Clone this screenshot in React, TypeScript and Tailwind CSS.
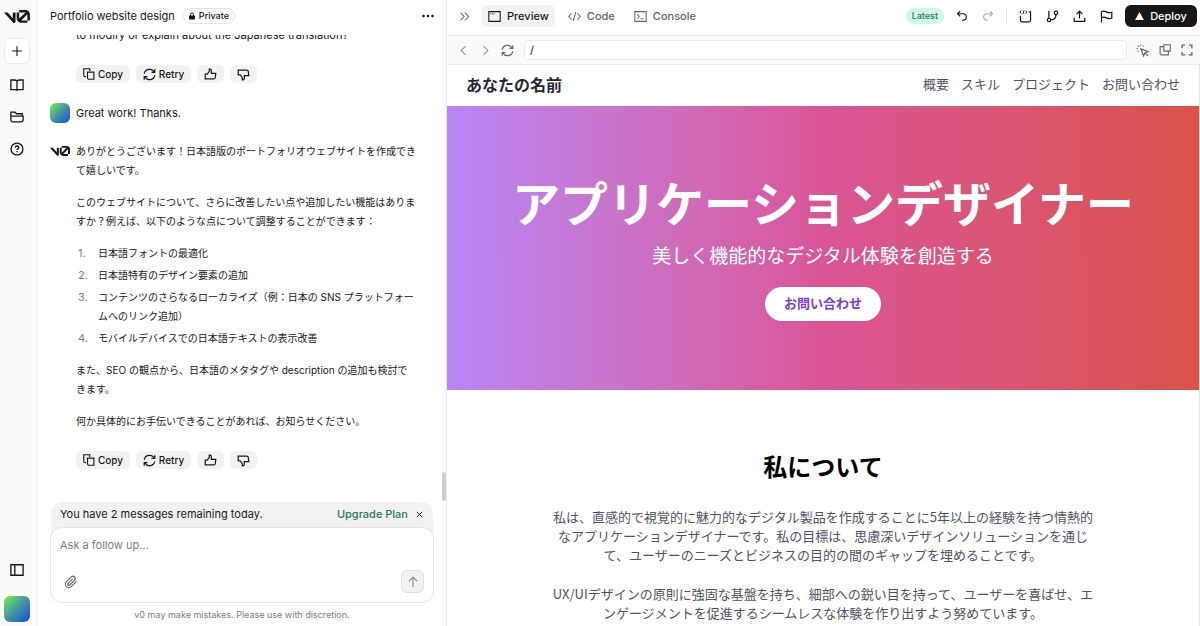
import { useState } from 'react'
import type { ReactNode } from 'react'

const FOLLOW_UPS = [
  '日本語フォントの最適化',
  '日本語特有のデザイン要素の追加',
  'コンテンツのさらなるローカライズ（例：日本の SNS プラットフォームへのリンク追加）',
  'モバイルデバイスでの日本語テキストの表示改善',
]

const SITE_LINKS = [
  { href: '#overview', label: '概要' },
  { href: '#skills', label: 'スキル' },
  { href: '#projects', label: 'プロジェクト' },
  { href: '#contact', label: 'お問い合わせ' },
]

type Tab = 'preview' | 'code' | 'console'

export default function App() {
  return (
    <div className="flex h-screen overflow-hidden bg-white font-['Inter','Noto_Sans_CJK_JP',sans-serif] text-[#171717]">
      <Sidebar />
      <ChatPanel />
      <PreviewPanel />
    </div>
  )
}

function Sidebar() {
  return (
    <nav className="flex w-[38px] shrink-0 flex-col items-center border-r border-[#f0f0f0] bg-[#fafafa] pt-[10px] pb-1 pr-[3px]">
      <a href="#home" aria-label="Home" className="flex h-3 items-center">
        <Logo className="h-[13px] w-[26px]" />
      </a>
      <button
        aria-label="New chat"
        className="mt-4 flex size-[26px] items-center justify-center rounded-md border border-[#ebebeb] bg-white"
      >
        <Icon className="size-3">
          <path d="M8 1.500v13M1.500 8h13" />
        </Icon>
      </button>
      <div className="mt-[14px] flex flex-col gap-[18px]">
        <button aria-label="Library" className="size-[14px]">
          <Icon className="size-[14px]">
            <path d="M8 3.500v10M8 3.500C7.300 2.800 6.400 2.300 5.300 2.300H1v10.900h4.500c1 0 1.900.3 2.500.8.6-.5 1.500-.8 2.500-.8H15V2.300h-4.300C9.600 2.300 8.700 2.800 8 3.500z" />
          </Icon>
        </button>
        <button aria-label="Projects" className="size-[14px]">
          <Icon className="size-[14px]">
            <path d="M1 7V2.500h4.800l1.700 1.800H14V7M1 7h14v4.500c0 1.100-.9 2-2 2H3c-1.100 0-2-.9-2-2V7z" />
          </Icon>
        </button>
        <button aria-label="Help" className="size-[14px]">
          <Icon className="size-[14px]">
            <circle cx="8" cy="8" r="6.800" />
            <path d="M6 6.500c0-1.100.9-1.900 2-1.900s2 .7 2 1.800c0 1.400-2 1.500-2 2.800M8 10.300v1.500" />
          </Icon>
        </button>
      </div>
      <div className="mt-auto flex flex-col items-center gap-[19px]">
        <button aria-label="Toggle sidebar" className="size-[14px]">
          <Icon className="size-[14px]">
            <path d="M1 2h14v12H1zM5.500 2v12" />
          </Icon>
        </button>
        <button
          aria-label="Account"
          className="size-[26px] rounded-md bg-linear-135 from-[#6ee04f] from-10% via-[#4691a0] to-[#1e45e6]"
        />
      </div>
    </nav>
  )
}

function ChatPanel() {
  const [message, setMessage] = useState('')
  const [showBanner, setShowBanner] = useState(true)

  return (
    <section className="relative flex w-[409px] shrink-0 flex-col border-r border-[#ebebeb]">
      <header className="flex h-[35px] shrink-0 items-center pr-3 pb-[3px] pl-3">
        <h1 className="text-[11px] leading-4">Portfolio website design</h1>
        <span className="ml-2 flex h-4 items-center gap-1 rounded-full border border-[#e5e5e5] px-[5px] text-[9px] font-medium">
          <svg viewBox="0 0 12 14" className="h-2 w-[6px]" aria-hidden="true">
            <rect x="0" y="6" width="12" height="8" rx="1.500" fill="currentColor" />
            <path d="M3 7V4a3 3 0 0 1 6 0v3" fill="none" stroke="currentColor" strokeWidth="2" />
          </svg>
          Private
        </span>
        <button aria-label="More" className="ml-auto">
          <svg viewBox="0 0 12 12" className="size-3" fill="currentColor" aria-hidden="true">
            <circle cx="1.500" cy="6" r="1.300" />
            <circle cx="6" cy="6" r="1.300" />
            <circle cx="10.500" cy="6" r="1.300" />
          </svg>
        </button>
      </header>

      {/* Messages stay pinned to the newest one */}
      <div className="flex min-h-0 flex-1 flex-col justify-end overflow-hidden px-3 pb-[33px] text-[10px] leading-[19px]">
        <div className="pl-[26px]">
          <p className="text-[11px]">to modify or explain about the Japanese translation?</p>
          <MessageActions />
        </div>

        <div className="mt-5 flex items-center gap-[6px]">
          <span className="size-5 rounded-md bg-linear-135 from-[#6ee04f] from-10% via-[#4691a0] to-[#1e45e6]" />
          <p className="text-[11px]">Great work! Thanks.</p>
        </div>

        <div className="mt-[19px] flex gap-[6px]" lang="ja">
          <Logo className="mt-1 h-[10px] w-5 shrink-0" />
          <div className="w-[340px]">
            <div className="flex flex-col gap-[13px]">
              <p>ありがとうございます！日本語版のポートフォリオウェブサイトを作成できて嬉しいです。</p>
              <p>
                このウェブサイトについて、さらに改善したい点や追加したい機能はありますか？例えば、以下のような点について調整することができます：
              </p>
              <ol className="flex flex-col gap-[3px]">
                {FOLLOW_UPS.map((item, i) => (
                  <li key={item} className="flex">
                    <span className="w-[22px] shrink-0 pl-[2px] text-[11px] text-[#7d7d7d]">{i + 1}.</span>
                    <span>{item}</span>
                  </li>
                ))}
              </ol>
              <p>また、SEO の観点から、日本語のメタタグや description の追加も検討できます。</p>
              <p>何か具体的にお手伝いできることがあれば、お知らせください。</p>
            </div>
            <MessageActions />
          </div>
        </div>
      </div>

      <div className="absolute top-[472px] right-0 h-[29px] w-1 rounded-full bg-[#cfcfcf]" />

      <div className="shrink-0 px-3 pb-1">
        {showBanner && (
          <div className="mx-px -mb-3 flex h-[37px] items-center rounded-t-xl bg-[#f2f2f2] px-[9px] pb-3 text-[11px]">
            <span>You have 2 messages remaining today.</span>
            <a href="#upgrade" className="ml-auto font-medium text-[#2c7566]">
              Upgrade Plan
            </a>
            <button aria-label="Dismiss" onClick={() => setShowBanner(false)} className="ml-2 mr-px">
              <Icon className="size-[7px]" strokeWidth={2.200}>
                <path d="M2 2l12 12M14 2L2 14" />
              </Icon>
            </button>
          </div>
        )}
        <form
          onSubmit={(e) => e.preventDefault()}
          className="relative flex h-[76px] flex-col rounded-xl border border-[#e5e5e5] bg-white px-[9px] pt-[9px] pb-[9px]"
        >
          <textarea
            aria-label="Ask a follow up"
            value={message}
            onChange={(e) => setMessage(e.target.value)}
            placeholder="Ask a follow up…"
            className="min-h-0 flex-1 resize-none overflow-hidden text-[11px] leading-4 outline-none placeholder:text-[#7d7d7d]"
          />
          <div className="flex items-center justify-between pl-1">
            <button type="button" aria-label="Attach file" className="text-[#666]">
              <Icon className="size-[14px]" strokeWidth={1.300}>
                <path d="M14.200 7.300l-6 6c-1.500 1.500-4 1.500-5.500 0s-1.500-4 0-5.500l5.700-5.700c1-1 2.700-1 3.700 0s1 2.700 0 3.700L6.500 11.400c-.5.500-1.300.5-1.800 0s-.5-1.300 0-1.800L9.800 4.500" />
              </Icon>
            </button>
            <button
              aria-label="Send"
              className="flex size-[23px] items-center justify-center rounded-md border border-[#e0e0e0] bg-[#f2f2f2] text-[#8f8f8f]"
            >
              <Icon className="size-3">
                <path d="M8 15V1.500M2.500 7L8 1.500 13.500 7" />
              </Icon>
            </button>
          </div>
        </form>
        <p className="mt-[5px] text-center text-[9px] leading-[14px] text-[#7d7d7d]">
          v0 may make mistakes. Please use with discretion.
        </p>
      </div>
    </section>
  )
}

function MessageActions() {
  return (
    <div className="mt-5 flex h-[18px] gap-[6px] text-[10px] font-medium">
      <button className="flex w-[54px] items-center justify-center gap-[3px] rounded-md bg-[#f2f2f2]">
        <Icon className="size-3">
          <path d="M4 11.500H3c-1.100 0-2-.9-2-2V1h8v3M6 5.500h8.500V15H8c-1.100 0-2-.9-2-2z" />
        </Icon>
        Copy
      </button>
      <button className="flex w-[55px] items-center justify-center gap-[3px] rounded-md bg-[#f2f2f2]">
        <RefreshIcon />
        Retry
      </button>
      <button aria-label="Good response" className="flex w-[27px] items-center justify-center rounded-md bg-[#f2f2f2]">
        <ThumbIcon className="size-[13px]" />
      </button>
      <button aria-label="Bad response" className="flex w-[27px] items-center justify-center rounded-md bg-[#f2f2f2]">
        <ThumbIcon className="size-[13px] -scale-y-100" />
      </button>
    </div>
  )
}

function PreviewPanel() {
  const [tab, setTab] = useState<Tab>('preview')
  const [path, setPath] = useState('/')

  return (
    <section className="flex min-w-0 flex-1 flex-col">
      <header className="flex h-9 shrink-0 items-center border-b border-[#ebebeb] pr-[3px] pb-[3px] pl-3">
        <button aria-label="Collapse" className="mr-3 text-[#666]">
          <Icon className="size-[11px]">
            <path d="M2 2.500L7.500 8 2 13.500M8.500 2.500L14 8l-5.500 5.500" />
          </Icon>
        </button>
        <TabButton label="Preview" active={tab === 'preview'} onClick={() => setTab('preview')}>
          <path d="M1 2h14v12H1zM3 4.500h1M5 4.500h1M7 4.500h1" />
        </TabButton>
        <TabButton label="Code" active={tab === 'code'} onClick={() => setTab('code')}>
          <path d="M4.500 4L.8 8l3.700 4M11.500 4l3.700 4-3.700 4M9.500 2.500l-3 11" />
        </TabButton>
        <TabButton label="Console" active={tab === 'console'} onClick={() => setTab('console')}>
          <path d="M1 2h14v12H1zM4 5.500L6.500 8 4 10.500M8 10.700h3.500" />
        </TabButton>

        <span className="ml-auto flex h-4 items-center rounded-full bg-[#cdf7ea] px-[6px] text-[9px] font-medium text-[#2c7566]">
          Latest
        </span>
        <div className="ml-3 flex items-center gap-[14px]">
          <button aria-label="Undo" className="size-3">
            <Icon className="size-3">
              <path d="M5.500 1.500L2 5l3.500 3.500M2 5h7.500a4.300 4.300 0 0 1 0 8.600H8" />
            </Icon>
          </button>
          <button aria-label="Redo" className="size-3 text-[#a8a8a8]">
            <Icon className="size-3">
              <path d="M10.500 1.500L14 5l-3.500 3.500M14 5H6.500a4.300 4.300 0 0 0 0 8.600H8" />
            </Icon>
          </button>
        </div>
        <div className="mx-3 h-4 w-px bg-[#e5e5e5]" />
        <div className="flex items-center gap-[14px]">
          <button aria-label="Add to codebase" className="size-[13px]">
            <Icon className="size-[13px]">
              <path d="M1.800 7v5.700c0 1 .8 1.800 1.800 1.800h8.800c1 0 1.800-.8 1.800-1.800V2.200H12" />
              <path strokeWidth="1.200" d="M3 .8L1 2.700l2 1.900M8 .8l2 1.900-2 1.900M6.200.5L4.800 5" />
            </Icon>
          </button>
          <button aria-label="Branch" className="size-[13px]">
            <Icon className="size-[13px]">
              <path d="M3.500 1v9M12.300 5.500c0 3.800-2.500 6.500-6.500 6.800" />
              <circle cx="3.700" cy="12.300" r="2.100" />
              <circle cx="12.300" cy="3.500" r="2.100" />
            </Icon>
          </button>
          <button aria-label="Share" className="size-[13px]">
            <Icon className="size-[13px]">
              <path d="M8 10.500V1.500M4.500 5L8 1.500 11.500 5M1.500 9.500V14h13V9.500" />
            </Icon>
          </button>
          <button aria-label="Report" className="size-[13px]">
            <Icon className="size-[13px]">
              <path d="M1.800 15.500V2.200c2-1.200 4.200-1 6.200.1s4.200 1.300 6.500.4v7.500c-2.300.9-4.500.6-6.500-.5s-4.200-1.200-6.200 0" />
            </Icon>
          </button>
        </div>
        <button className="ml-3 flex h-[22px] w-[72px] items-center justify-center gap-[6px] rounded-md bg-[#171717] text-[11px] font-medium text-white">
          <svg viewBox="0 0 10 9" className="h-2 w-[9px]" aria-hidden="true">
            <path d="M5 0l5 9H0z" fill="currentColor" />
          </svg>
          Deploy
        </button>
      </header>

      <div className="flex h-[29px] shrink-0 items-center border-b border-[#ebebeb] bg-[#fafafa] pr-[7px] pl-[11px] text-[#666]">
        <button aria-label="Back" className="text-[#8f8f8f]">
          <Icon className="size-[11px]">
            <path d="M11 1.500L4.500 8l6.500 6.500" />
          </Icon>
        </button>
        <button aria-label="Forward" className="ml-[11px] text-[#8f8f8f]">
          <Icon className="size-[11px]">
            <path d="M5 1.500L11.500 8 5 14.500" />
          </Icon>
        </button>
        <button aria-label="Reload" className="ml-[10px]">
          <RefreshIcon />
        </button>
        <input
          aria-label="Path"
          value={path}
          onChange={(e) => setPath(e.target.value)}
          className="ml-[10px] h-5 min-w-0 flex-1 rounded border border-[#ebebeb] bg-white px-[5px] text-[11px] text-[#171717] outline-none"
        />
        <div className="ml-[9px] flex items-center gap-[10px]">
          <button aria-label="Select element" className="size-[13px]">
            <Icon className="size-[13px]">
              <path d="M6 6l8.800 3.300-3.800 1.600L9.300 14.800zM11.500 11.500l3.500 3.500" />
              <path d="M.8 5.700h1.500M5.700.8v1.500M2 2l1.300 1.300M9.300 2L8.300 3M2 9.300l1-1" />
            </Icon>
          </button>
          <button aria-label="Open in new window" className="size-3">
            <Icon className="size-3">
              <path d="M6.500 1H15v8.500H6.500zM6.500 3.500H1.500V13c0 .8.700 1.500 1.500 1.500h9.500v-5" />
            </Icon>
          </button>
          <button aria-label="Fullscreen" className="size-3">
            <Icon className="size-3" strokeWidth={1.800}>
              <path d="M1.500 5.500v-4h4M10.500 1.500h4v4M14.500 10.500v4h-4M5.500 14.500h-4v-4" />
            </Icon>
          </button>
        </div>
      </div>

      <PortfolioSite />
    </section>
  )
}

function TabButton({
  label,
  active,
  onClick,
  children,
}: {
  label: string
  active: boolean
  onClick: () => void
  children: ReactNode
}) {
  return (
    <button
      onClick={onClick}
      className={`flex h-[22px] items-center gap-[6px] rounded-md px-[6px] text-[11px] font-medium ${
        active ? 'bg-[#f2f2f2] text-[#171717]' : 'ml-[7px] text-[#666]'
      }`}
    >
      <Icon className="size-[13px]" strokeWidth={1.300}>
        {children}
      </Icon>
      {label}
    </button>
  )
}

function PortfolioSite() {
  return (
    <div
      lang="ja"
      className="min-h-0 flex-1 overflow-hidden border-r border-[#e5e5e5] bg-white font-['Noto_Sans_CJK_JP',sans-serif]"
    >
      <header className="flex h-[41px] items-center justify-between px-[19px] pb-1">
        <span className="text-[16px] leading-6 font-bold text-[#1f2937]">あなたの名前</span>
        <nav className="flex gap-3 text-[13px] leading-5 text-[#4b5563]">
          {SITE_LINKS.map(({ href, label }) => (
            <a key={href} href={href}>
              {label}
            </a>
          ))}
        </nav>
      </header>

      <section className="flex flex-col items-center bg-linear-to-r from-[#b886f6] via-[#da5596] to-[#dc5147] pt-[72px] pb-[69px] text-white">
        <h2 className="mb-[17px] text-[48px] leading-[47px] font-bold">アプリケーションデザイナー</h2>
        <p className="mb-5 text-[19px] leading-[25px]">美しく機能的なデジタル体験を創造する</p>
        <a
          href="#contact"
          className="flex h-[34px] items-center rounded-full bg-white px-[19px] pb-[2px] text-[13px] font-bold text-[#7e3bd8]"
        >
          お問い合わせ
        </a>
      </section>

      <section className="flex flex-col items-center pt-[61px] text-center">
        <h2 className="mb-[27px] text-[24px] leading-[29px] font-bold text-black">私について</h2>
        <div className="flex max-w-[548px] flex-col gap-5 text-[13px] leading-[19px] text-[#4b5563]">
          <p>
            私は、直感的で視覚的に魅力的なデジタル製品を作成することに5年以上の経験を持つ情熱的なアプリケーションデザイナーです。私の目標は、思慮深いデザインソリューションを通じて、ユーザーのニーズとビジネスの目的の間のギャップを埋めることです。
          </p>
          <p>
            UX/UIデザインの原則に強固な基盤を持ち、細部への鋭い目を持って、ユーザーを喜ばせ、エンゲージメントを促進するシームレスな体験を作り出すよう努めています。
          </p>
        </div>
      </section>
    </div>
  )
}

function Icon({
  className,
  strokeWidth = 1.500,
  children,
}: {
  className: string
  strokeWidth?: number
  children: ReactNode
}) {
  return (
    <svg
      viewBox="0 0 16 16"
      className={className}
      fill="none"
      stroke="currentColor"
      strokeWidth={strokeWidth}
      aria-hidden="true"
    >
      {children}
    </svg>
  )
}

function RefreshIcon() {
  return (
    <Icon className="size-[13px]">
      <path d="M1.500 7A6.600 6.600 0 0 1 13.700 5M14.500 9A6.600 6.600 0 0 1 2.300 11M14.500 1.500v4h-4M1.500 14.500v-4h4" />
    </Icon>
  )
}

function ThumbIcon({ className }: { className: string }) {
  return (
    <Icon className={className}>
      <path d="M1.500 7.500H4l2.500-3.500V1.500h.8c1 0 1.700.8 1.700 1.700V6.500h5.500l-.6 5.200c-.1 1.100-1 1.800-2 1.800H1.500z" />
    </Icon>
  )
}

function Logo({ className }: { className: string }) {
  return (
    <svg viewBox="0 0 40 20" className={className} fill="currentColor" aria-hidden="true">
      <path d="M23.392 0h9.527a6.995 6.995 0 0 1 6.995 6.995v9.085H36V6.995c0-.093-.003-.185-.010-.277l-9.527 9.361.097.001H36v3.696h-9.440c-3.864 0-7.081-3.162-7.081-7.025V3.689h3.913v9.062c0 .174.013.347.040.516l9.736-9.567a3.060 3.060 0 0 0-.249-.010h-9.527z" />
      <path d="M13.769 19.096L0 3.688h5.539l8.084 9.046V3.688h4.130v13.887c0 2.095-2.588 3.083-3.984 1.521z" />
    </svg>
  )
}
